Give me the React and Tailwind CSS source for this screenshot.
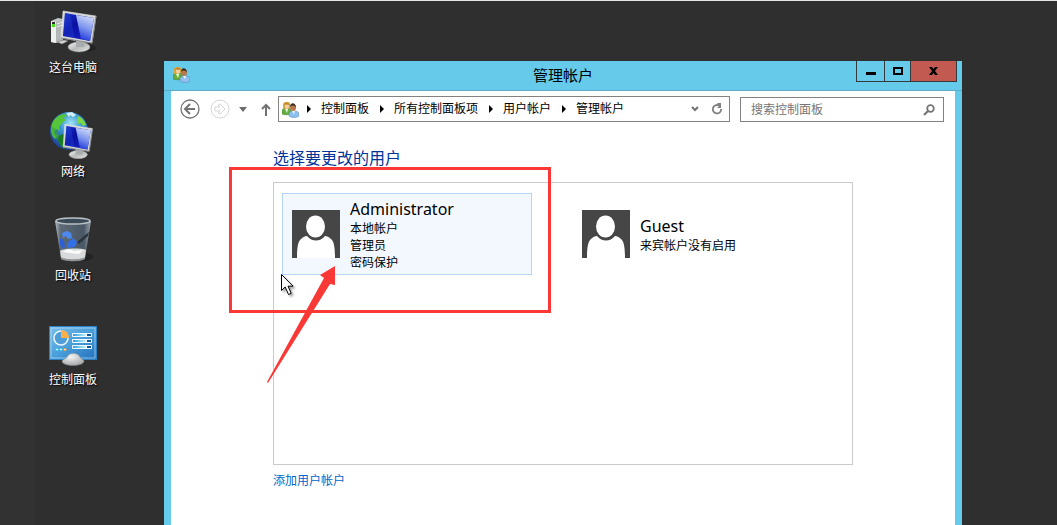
function ScreenShape({ id }) {
  return (
    <>
      <defs>
        <linearGradient id={`${id}-base`} x1="0" y1="0" x2="1" y2="1">
          <stop offset="0" stopColor="#f4f4f4" />
          <stop offset="0.5" stopColor="#b9bbbb" />
          <stop offset="1" stopColor="#e9e9e9" />
        </linearGradient>
        <linearGradient id={`${id}-glass`} x1="0" y1="0" x2="1" y2="1">
          <stop offset="0" stopColor="#1c35cf" />
          <stop offset="0.4" stopColor="#0a0fa0" />
          <stop offset="1" stopColor="#1a2cd2" />
        </linearGradient>
        <linearGradient id={`${id}-shine`} x1="0.7" y1="0" x2="0.4" y2="1">
          <stop offset="0" stopColor="#d5defa" />
          <stop offset="0.5" stopColor="#7f97ee" />
          <stop offset="1" stopColor="#2038d8" />
        </linearGradient>
      </defs>
      <ellipse cx="30" cy="40" rx="11" ry="5" fill={`url(#${id}-base)`} stroke="#8d9090" strokeWidth="0.5" />
      <path d="M27 33l9 1-1 6h-8z" fill="#a9acac" />
      <path d="M14 4L47 9l-4 27L12 31z" fill="#d4d6d6" stroke="#efefef" strokeWidth="0.5" />
      <path d="M47 9l-4 27L12 31" fill="none" stroke="#85888a" />
      <path d="M16 6l29 5-4 23L14 29z" fill={`url(#${id}-glass)`} />
      <path d="M27 8l18 3-4 23-9-2z" fill={`url(#${id}-shine)`} />
      <path d="M16 6l5 1 5 24-12-2z" fill="#2c4fe2" opacity="0.3" />
    </>
  );
}

function ComputerIcon() {
  return (
    <svg viewBox="0 0 48 48" className="h-12 w-12" aria-hidden="true">
      <ellipse cx="36" cy="41" rx="11" ry="4" fill="#1c1c1c" opacity="0.6" />
      <path d="M2 14l7-3 5 1v21l-7 3-5-1z" fill="#c5c8c8" />
      <path d="M2 14l5 1v21l-5-1z" fill="#eeefef" />
      <path d="M7 15l7-3v21l-7 3z" fill="#b4b7b7" />
      <path d="M8 17l5-2M8 20l5-2" stroke="#eee" />
      <rect x="3" y="15" width="3" height="4" fill="#29312a" />
      <rect x="3" y="17" width="3" height="3" fill="#43e21f" />
      <path d="M8 35l7-2 4 1-6 3z" fill="#d4d5d5" stroke="#777" strokeWidth="0.5" />
      <ScreenShape id="pc" />
    </svg>
  );
}

function NetworkIcon() {
  return (
    <svg viewBox="0 0 48 48" className="h-12 w-12" aria-hidden="true">
      <defs>
        <radialGradient id="ocean" cx="0.55" cy="0.3" r="0.7">
          <stop offset="0" stopColor="#a5e6f5" />
          <stop offset="0.4" stopColor="#3a98d4" />
          <stop offset="1" stopColor="#1b3f97" />
        </radialGradient>
      </defs>
      <circle cx="20" cy="20" r="19" fill="url(#ocean)" />
      <path d="M5 9c3-4 7-6 11-6l2 2-4 2 3 2-4 3-3 4 1 4-4-2-2 4 3 3-2 3c-5-5-5-13-1-19z" fill="#55c53a" />
      <path d="M3 16l4 2 3 7-1 4c-4-3-6-8-6-13z" fill="#3ea437" opacity="0.7" />
      <path d="M9 26l4-3 5 2 1 6-3 7c-4-2-8-7-7-12z" fill="#187d22" />
      <path d="M29 5c4 2 7 5 8 9l-3 1-2-3-3 1-1-4z" fill="#7cd944" />
      <path d="M17 2l6-1 4 3-3 2-3-2-1 2z" fill="#e3f6f4" opacity="0.9" />
      <g transform="translate(4 10) scale(0.84)">
        <ScreenShape id="net" />
      </g>
    </svg>
  );
}

function RecycleBinIcon() {
  return (
    <svg viewBox="0 0 48 48" className="h-12 w-12" aria-hidden="true">
      <defs>
        <linearGradient id="bin" x1="0" y1="0" x2="1" y2="0">
          <stop offset="0" stopColor="#b3bbc1" />
          <stop offset="0.15" stopColor="#5d6a76" />
          <stop offset="0.8" stopColor="#495765" />
          <stop offset="1" stopColor="#9aa4ab" />
        </linearGradient>
      </defs>
      <ellipse cx="34" cy="42" rx="10" ry="4" fill="#1d1d1d" opacity="0.7" />
      <path d="M6 6l6 37c3 4 21 4 24 0l6-37z" fill="url(#bin)" />
      <path d="M11 36c3-3 22-3 26-1l-1 8c-3 3-21 3-24 0z" fill="#d8dadb" />
      <path d="M13 37l7-3 5 2 9-1-4 4-9-1z" fill="#fbfbfb" />
      <path d="M12 42c4 3 20 3 24 0v2c-3 3-21 3-24 0z" fill="#8f9394" />
      <path d="M28 27l12-10-1 4-9 8z" fill="#2b343c" />
      <path d="M13 18l5-2 4 2 1 5-4 1-2-3-3 2z" fill="#4d88ee" />
      <path d="M11 23l4 2 1 7-2 2-3-4z" fill="#2c60d4" />
      <path d="M18 28l6-5 4 4-2 5-8 1z" fill="#3270e8" />
      <ellipse cx="24" cy="6" rx="17" ry="3" fill="#3b4a58" stroke="#b9c0c4" strokeWidth="1.5" />
    </svg>
  );
}

function ControlPanelIcon() {
  return (
    <svg viewBox="0 0 48 48" className="h-12 w-12" aria-hidden="true">
      <defs>
        <linearGradient id="panel" x1="0" y1="0" x2="1" y2="1">
          <stop offset="0" stopColor="#7cc0ea" />
          <stop offset="0.5" stopColor="#4a9edb" />
          <stop offset="1" stopColor="#2270bd" />
        </linearGradient>
        <linearGradient id="slider" x1="0" y1="0" x2="1" y2="0">
          <stop offset="0" stopColor="#2b9fe0" />
          <stop offset="1" stopColor="#c4f3fb" />
        </linearGradient>
        <radialGradient id="knob" cx="0.4" cy="0.3" r="0.8">
          <stop offset="0" stopColor="#f5f5f5" />
          <stop offset="1" stopColor="#9c9fa1" />
        </radialGradient>
      </defs>
      <rect x="0.5" y="7.5" width="47" height="33" fill="url(#panel)" stroke="#2b80c6" />
      <rect x="2" y="9" width="44" height="30" fill="none" stroke="#b5dcf4" strokeWidth="0.7" />
      <circle cx="12" cy="19" r="7" fill="#4f9dd6" stroke="#e9f6fd" strokeWidth="1.5" />
      <path d="M12 11a8 8 0 0 1 8 8h-8z" fill="#f9b04b" />
      <circle cx="8" cy="30.5" r="1.2" fill="#fff" stroke="#39d0ea" />
      <circle cx="12" cy="30.5" r="1.2" fill="#fff" stroke="#39d0ea" />
      <circle cx="16" cy="30.5" r="1.2" fill="#fff" stroke="#f4952f" />
      {[14, 20, 26].map((y) => (
        <g key={y}>
          <rect x="23" y={y} width="20" height="4" rx="1" fill="#f2fafe" />
          <rect x="24" y={y + 1} width="13" height="2" fill="url(#slider)" />
          <rect x="38" y={y + 1} width="4" height="2" fill="#0f579f" />
        </g>
      ))}
      <path d="M13 42c1-2 4-2 5-4 2-5 11-5 13 0 1 2 3 2 4 4 0 6-22 6-22 0z" fill="url(#knob)" stroke="#85898b" strokeWidth="0.5" />
    </svg>
  );
}

function UsersIcon() {
  return (
    <svg viewBox="0 0 17 17" className="h-[17px] w-[17px] shrink-0" aria-hidden="true">
      <path d="M0 13V10c0-2 2-3 5-3s4 1 4 3v3c-2 1-7 1-9 0z" fill="#67ad3c" stroke="#3c7e22" strokeWidth="0.5" />
      <path d="M3 8h3l-1 4z" fill="#eef4e4" />
      <path d="M1 8V3C2 0 8 0 8 3v4z" fill="#d8a63f" />
      <ellipse cx="5" cy="5" rx="2" ry="3" fill="#f2cfa0" />
      <path d="M2 4C3 1 6 1 8 4 6 4 4 3 2 4z" fill="#b98226" />
      <path d="M7 15v-2c0-2 2-3 5-3s5 1 5 3v2c-3 2-7 2-10 0z" fill="#8fc0ee" stroke="#4e81b8" strokeWidth="0.5" />
      <path d="M10 10h3l-1 3z" fill="#eff6fc" />
      <ellipse cx="11" cy="6.5" rx="3" ry="3.5" fill="#b57a4c" />
      <path d="M8 6c0-5 6-5 6 1-1-3-4-3-6-1z" fill="#3a2b22" />
    </svg>
  );
}

function Avatar() {
  return (
    <svg viewBox="0 0 48 48" className="h-12 w-12 shrink-0" aria-hidden="true">
      <rect width="48" height="48" fill="#464646" />
      <ellipse cx="23.5" cy="16.5" rx="9.5" ry="11" fill="#fff" />
      <path d="M5 48C5 38 6 31 9 29c2-2 4-3 6-3 5 6 13 6 18 0 2 0 4 1 6 3 3 2 4 9 4 19z" fill="#fff" />
    </svg>
  );
}

const shortcuts = [
  { name: "这台电脑", icon: <ComputerIcon /> },
  { name: "网络", icon: <NetworkIcon /> },
  { name: "回收站", icon: <RecycleBinIcon /> },
  { name: "控制面板", icon: <ControlPanelIcon /> },
];

const crumbs = ["控制面板", "所有控制面板项", "用户帐户", "管理帐户"];

const accounts = [
  { name: "Administrator", details: ["本地帐户", "管理员", "密码保护"], active: true },
  { name: "Guest", details: ["来宾帐户没有启用"], active: false },
];

function Desktop() {
  return (
    <nav className="w-[164px] shrink-0 border-l-[34px] border-[#323232] pt-1.5">
      <ul className="flex w-[78px] flex-col gap-9">
        {shortcuts.map((item) => (
          <li key={item.name}>
            <button type="button" className="flex w-full flex-col items-center gap-1">
              {item.icon}
              <span className="text-xs leading-4 text-white [text-shadow:1px_1px_2px_#000]">
                {item.name}
              </span>
            </button>
          </li>
        ))}
      </ul>
    </nav>
  );
}

function TitleBar() {
  return (
    <header className="grid h-[30px] grid-cols-[1fr_auto_1fr] border-b border-[#5fa9c9]">
      <div className="pt-[5px] pl-[9px]">
        <UsersIcon />
      </div>
      <h1 className="text-[15px] leading-[27px] text-black">管理帐户</h1>
      <div className="mr-[5px] flex h-[21px] justify-self-end border border-t-0 border-[#34393c]">
        <button type="button" aria-label="最小化" className="flex w-7 items-center justify-center border-r border-[#34393c]">
          <svg viewBox="0 0 10 10" className="h-2.5 w-2.5">
            <path d="M0 6h10v3H0z" />
          </svg>
        </button>
        <button type="button" aria-label="最大化" className="flex w-[26px] items-center justify-center border-r border-[#34393c]">
          <svg viewBox="0 0 10 8" className="h-2 w-2.5">
            <path d="M0 0h10v8H0zM2 2v4h6V2z" fillRule="evenodd" />
          </svg>
        </button>
        <button type="button" aria-label="关闭" className="flex w-[45px] items-center justify-center bg-[#c35a51]">
          <svg viewBox="0 0 9 8" className="h-2 w-[9px]">
            <path d="M0 0h3l1.500 2L6 0h3L6 4l3 4H6L4.500 6 3 8H0l3-4z" />
          </svg>
        </button>
      </div>
    </header>
  );
}

function NavBar() {
  return (
    <div className="flex items-center pt-[5px] pr-[11px] pl-[9px]">
      <button type="button" aria-label="后退" className="mr-2.5">
        <svg viewBox="0 0 20 20" className="h-5 w-5" fill="none" stroke="#737373">
          <circle cx="10" cy="10" r="9" strokeWidth="1.3" />
          <path d="M15 10H6M10 5l-5 5 5 5" strokeWidth="2" />
        </svg>
      </button>
      <button type="button" aria-label="前进" className="mr-[9px]">
        <svg viewBox="0 0 20 20" className="h-5 w-5" fill="none" stroke="#d6d6d6">
          <circle cx="10" cy="10" r="9" />
          <path d="M5 8h5L8 6l2-1 5 5-5 5-2-1 2-2H5z" />
        </svg>
      </button>
      <button type="button" aria-label="最近浏览的位置" className="mr-3.5">
        <svg viewBox="0 0 8 5" className="h-[5px] w-2" fill="#6d6d6d">
          <path d="M0 0h8L4 5z" />
        </svg>
      </button>
      <button type="button" aria-label="向上" className="mr-[7px]">
        <svg viewBox="0 0 10 13" className="h-[13px] w-2.5" fill="none" stroke="#737373" strokeWidth="2">
          <path d="M5 13V2M1 6l4-4 4 4" />
        </svg>
      </button>
      <div className="flex h-[26px] min-w-0 flex-1 items-center border border-[#828282] pl-[3px]">
        <UsersIcon />
        <ol className="flex flex-1 pb-0.5 pl-2">
          {crumbs.map((crumb) => (
            <li key={crumb} className="flex items-center">
              <svg viewBox="0 0 5 8" className="mt-0.5 h-2 w-[5px]" aria-hidden="true">
                <path d="M0 0l4 4-4 4z" />
              </svg>
              <a href="#" className="mr-[11px] ml-[9px] text-xs leading-4 whitespace-nowrap text-black">
                {crumb}
              </a>
            </li>
          ))}
        </ol>
        <button type="button" aria-label="以前的位置" className="mr-3">
          <svg viewBox="0 0 8 6" className="h-1.5 w-2" fill="none" stroke="#737373" strokeWidth="2">
            <path d="M1 1l3 3 3-3" />
          </svg>
        </button>
        <button type="button" aria-label="刷新" className="mr-1.5">
          <svg viewBox="0 0 12 12" className="h-3 w-3" fill="none" stroke="#808080" strokeWidth="1.8">
            <path d="M8 2.500A4.200 4.200 0 1 0 10.200 6" />
            <path d="M6 0h4v5H6l2-2z" fill="#808080" stroke="none" />
          </svg>
        </button>
      </div>
      <form className="mt-px ml-2.5 flex h-[25px] w-[204px] items-center border border-[#828282] pr-2 pl-[10px]">
        <input
          type="search"
          aria-label="搜索控制面板"
          placeholder="搜索控制面板"
          className="min-w-0 flex-1 pb-0.5 text-xs leading-4 outline-none placeholder:text-[#757575]"
        />
        <button type="submit" aria-label="搜索">
          <svg viewBox="0 0 12 12" className="h-3 w-3" fill="none" stroke="#757575">
            <circle cx="7.5" cy="4.5" r="3.3" strokeWidth="1.8" />
            <path d="M5 7l-4 4" strokeWidth="2.2" />
          </svg>
        </button>
      </form>
    </div>
  );
}

function AccountCard({ account }) {
  return (
    <button
      type="button"
      className={`flex h-[82px] w-[250px] items-center gap-2.5 border px-[9px] text-left text-black ${
        account.active ? "border-[#b5d5f8] bg-[#f3f8ff]" : "border-transparent"
      }`}
    >
      <Avatar />
      <span className="flex flex-col">
        <span className="font-['Noto_Sans','Noto_Sans_CJK_SC',sans-serif] text-base leading-5">
          {account.name}
        </span>
        {account.details.map((line) => (
          <span key={line} className="text-xs leading-[17px]">
            {line}
          </span>
        ))}
      </span>
    </button>
  );
}

// Red frame and arrow that point at the account, plus the mouse pointer
function Annotations() {
  return (
    <div className="pointer-events-none absolute inset-0" aria-hidden="true">
      <div className="absolute -top-4 -left-[45px] h-[146px] w-[322px] border-[3px] border-[#fa3937]" />
      <svg viewBox="0 0 72 120" className="absolute top-[83px] -left-[8px] h-[120px] w-[72px]">
        <path d="M69 0L54 9l4 3L1 116l1 1L64 18l5 1z" fill="#fa3937" />
      </svg>
      <svg viewBox="0 0 16 24" className="absolute top-[91px] left-[7px] h-6 w-4 drop-shadow-[2px_2px_1px_rgba(0,0,0,0.35)]">
        <path d="M.5.500v16l3.700-3.500 3.300 7.500 2.700-1.200L7 12.200h5z" fill="#fff" stroke="#000" />
      </svg>
    </div>
  );
}

function App() {
  return (
    <div className="flex min-h-screen border-t border-[#e3e9e8] bg-[#2f2f2f] font-['Noto_Sans_CJK_SC',sans-serif]">
      <Desktop />
      <section className="mt-[60px] mr-[95px] flex min-w-0 flex-1 flex-col bg-[#66caea]">
        <TitleBar />
        <main className="mx-[7px] flex-1 bg-white">
          <NavBar />
          <div className="px-[102px] pt-[23px]">
            <h2 className="text-base leading-6 text-[#003399]">选择要更改的用户</h2>
            <div className="relative mt-[13px] min-h-[283px] border border-[#cbcbcb] px-2 py-2.5">
              <div className="flex flex-wrap gap-10">
                {accounts.map((account) => (
                  <AccountCard key={account.name} account={account} />
                ))}
              </div>
              <Annotations />
            </div>
            <a href="#" className="mt-[7px] inline-block text-xs leading-4 text-[#0066cc]">
              添加用户帐户
            </a>
          </div>
        </main>
      </section>
    </div>
  );
}

export default App;
